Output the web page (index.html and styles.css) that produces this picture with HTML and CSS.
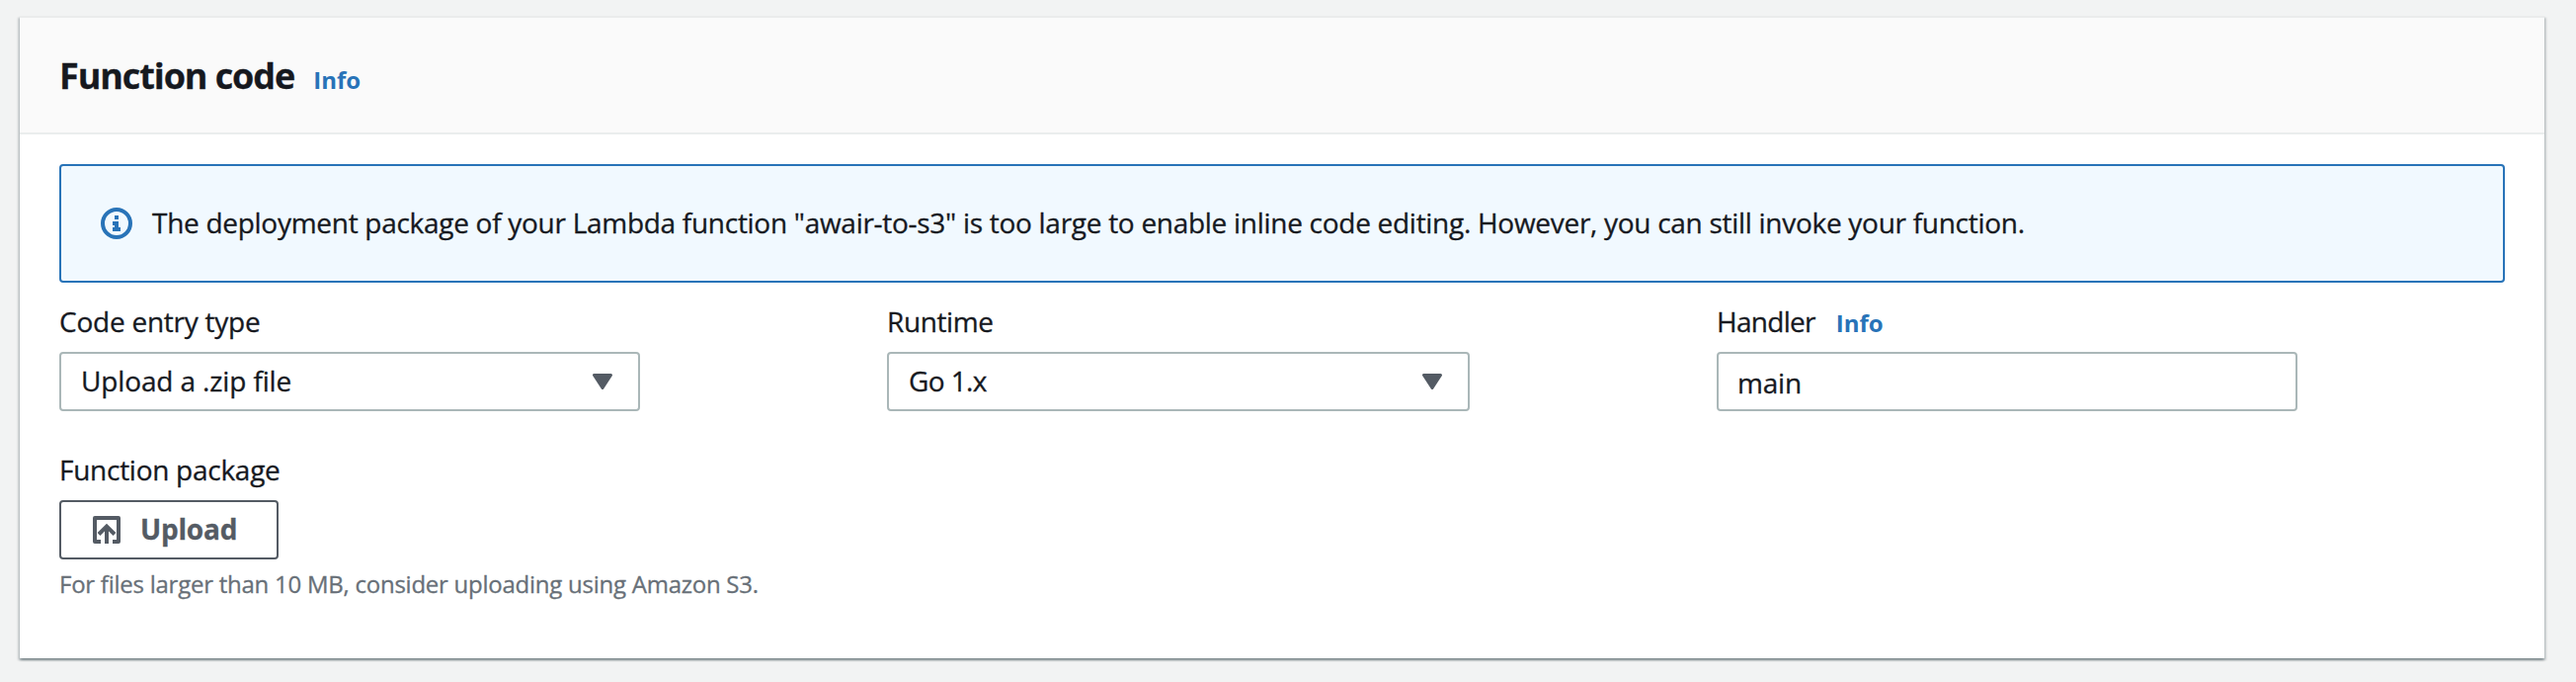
FILE: index.html
```html
<!DOCTYPE html>
<html lang="en">
<head>
<meta charset="utf-8">
<title>Function code</title>
<link rel="stylesheet" href="styles.css">
</head>
<body>
<section class="card">
  <header class="card-header">
    <h2 class="card-title">Function code</h2>
    <a class="info-link">Info</a>
  </header>
  <div class="card-body">
    <div class="alert">
      <svg class="alert-icon" viewBox="0 0 32 32" width="32" height="32">
        <circle cx="16" cy="16" r="14" fill="none" stroke="currentColor" stroke-width="4"/>
        <path fill="currentColor" d="M14 8h4v4h-4zM12 14h6v6h2v4h-8v-4h2v-2h-2z"/>
      </svg>
      <p class="alert-text">The deployment package of your Lambda function "awair-to-s3" is too large to enable inline code editing. However, you can still invoke your function.</p>
    </div>
    <div class="fields">
      <div class="field">
        <div class="label"><span class="label-entry">Code entry type</span></div>
        <div class="control select">
          <span class="value-entry">Upload a .zip file</span>
          <svg class="caret" viewBox="0 0 20 16" width="20" height="16"><path d="M1.5 1.5h17L10 14.5z" fill="currentColor" stroke="currentColor" stroke-width="3" stroke-linejoin="round"/></svg>
        </div>
      </div>
      <div class="field">
        <div class="label"><span class="label-runtime">Runtime</span></div>
        <div class="control select">
          <span class="value-runtime">Go 1.x</span>
          <svg class="caret" viewBox="0 0 20 16" width="20" height="16"><path d="M1.5 1.5h17L10 14.5z" fill="currentColor" stroke="currentColor" stroke-width="3" stroke-linejoin="round"/></svg>
        </div>
      </div>
      <div class="field">
        <div class="label"><span class="label-handler">Handler</span><a class="info-link">Info</a></div>
        <div class="control input"><span class="value-handler">main</span></div>
      </div>
    </div>
    <div class="package">
      <div class="label"><span class="label-package">Function package</span></div>
      <button class="button" type="button">
        <svg class="button-icon" viewBox="0 0 28 28" width="28" height="28" fill="none" stroke="currentColor" stroke-width="4">
          <path d="M8 26H2V2h24v24h-6" stroke-linejoin="round"/>
          <path d="M14 28V10M6 18.5l8-8 8 8"/>
        </svg>
        <span>Upload</span>
      </button>
      <p class="hint">For files larger than 10 MB, consider uploading using Amazon S3.</p>
    </div>
  </div>
</section>
</body>
</html>
```
FILE: styles.css
```css
* { box-sizing: border-box; }

body {
  margin: 0;
  padding: 16px 32px 24px 20px;
  min-height: 690px;
  background: #f2f3f3;
  color: #16191f;
  font: 28px/44px "Open Sans", "Noto Sans", sans-serif;
  -webkit-text-stroke: .3px currentColor;
}

h2, p { margin: 0; }

.card {
  height: 650px;
  background: #fff;
  border-top: 2px solid #eaebeb;
  box-shadow: 0 2px 2px 0 rgba(0, 28, 36, .3),
    2px 2px 2px 0 rgba(0, 28, 36, .15),
    -2px 2px 2px 0 rgba(0, 28, 36, .15);
}

.card-header {
  display: flex;
  align-items: baseline;
  height: 118px;
  padding: 34px 40px 0;
  background: #fafafa;
  border-bottom: 2px solid #eaeded;
}

.card-title {
  font-size: 36px;
  line-height: 50px;
  font-weight: 700;
  letter-spacing: -1.09px;
}

.info-link {
  margin-left: 21px;
  color: #2873b8;
  font-size: 24px;
  font-weight: 700;
  line-height: 32px;
  -webkit-text-stroke: 0;
}

.card-header .info-link { margin-left: 19px; }

.card-body { padding: 30px 40px 0; }

.alert {
  display: flex;
  align-items: center;
  gap: 20px;
  height: 120px;
  padding: 0 40px;
  background: #f1f9ff;
  border: 2px solid #2873b8;
  border-radius: 4px;
}

.alert-icon { color: #2873b8; }

.alert-text {
  padding-bottom: 2px;
  letter-spacing: -.284px;
  white-space: nowrap;
}

.fields {
  display: grid;
  grid-template-columns: 588px 590px 588px;
  column-gap: 250px;
  margin-top: 17px;
}

.label {
  display: flex;
  align-items: baseline;
  height: 44px;
  margin-bottom: 9px;
}

.label-entry { letter-spacing: -.24px; }
.label-runtime { letter-spacing: -.4px; }
.label-handler { letter-spacing: -.7px; }
.label-package { letter-spacing: -.27px; }

.control {
  display: flex;
  align-items: center;
  height: 60px;
  border: 2px solid #aab7b8;
  border-radius: 4px;
  background: #fff;
}

.select {
  justify-content: space-between;
  padding: 0 26px 0 20px;
}

.select > span { padding-bottom: 2px; }
.input { padding: 2px 18px 0 19px; }

.value-entry { letter-spacing: -.13px; }
.value-runtime { letter-spacing: -.6px; }
.value-handler { letter-spacing: -.2px; }

.caret, .button { color: #545b64; }

.package { margin-top: 37px; }

.button {
  display: flex;
  align-items: center;
  gap: 20px;
  width: 222px;
  height: 60px;
  padding: 0 32px;
  border: 2px solid #545b64;
  border-radius: 4px;
  background: #fff;
  font: inherit;
  font-weight: 700;
  letter-spacing: -.2px;
}

.button span { padding-bottom: 2px; }

.hint {
  margin-top: 9px;
  color: #687078;
  font-size: 24px;
  line-height: 32px;
  letter-spacing: -.25px;
}
```
